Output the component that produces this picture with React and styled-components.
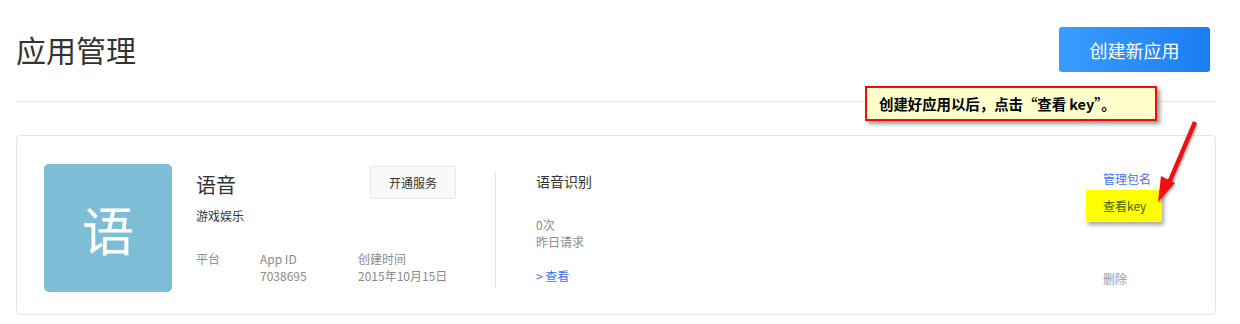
import React from "react";
import styled, { createGlobalStyle } from "styled-components";

const GlobalStyle = createGlobalStyle`
  body {
    margin: 0;
    background: #fff;
    font-family: "Noto Sans CJK SC", "Noto Sans", sans-serif;
    color: #333;
  }
`;

const Page = styled.div`
  position: relative;
  width: 1200px;
  margin-left: 16px;
  padding-top: 27px;
`;

const Header = styled.div`
  display: flex;
  justify-content: space-between;
  align-items: center;
  padding-bottom: 29px;
  border-bottom: 1px solid #e5e5e5;
`;

const Title = styled.h1`
  margin: 0;
  font-size: 30px;
  font-weight: 400;
  line-height: 45px;
  color: #333;
`;

const CreateButton = styled.button`
  width: 151px;
  height: 45px;
  margin-right: 6px;
  border: 0;
  border-radius: 3px;
  background: linear-gradient(to right, #3a9cfd, #1a7ef2);
  color: #fff;
  font-family: inherit;
  font-size: 18px;
`;

const Card = styled.div`
  display: flex;
  align-items: flex-start;
  margin-top: 33px;
  padding: 28px 28px 22px 27px;
  border: 1px solid #e5e5e5;
  border-radius: 4px;
  height: 128px;
`;

const AppIcon = styled.div`
  display: flex;
  align-items: center;
  justify-content: center;
  width: 128px;
  height: 128px;
  border-radius: 5px;
  background: #7dbed6;
  color: #fff;
  font-size: 52px;
`;

const Info = styled.div`
  display: flex;
  flex-direction: column;
  width: 260px;
  margin-left: 24px;
`;

const NameRow = styled.div`
  display: flex;
  justify-content: space-between;
  align-items: flex-start;
`;

const Name = styled.div`
  margin-top: 9px;
  font-size: 20px;
  line-height: 24px;
`;

const ServiceButton = styled.button`
  width: 86px;
  height: 33px;
  margin-top: 2px;
  border: 1px solid #e8e8e8;
  border-radius: 2px;
  background: #f9f9f9;
  color: #333;
  font-family: inherit;
  font-size: 12px;
`;

const Category = styled.div`
  margin-top: 8px;
  font-size: 12px;
  line-height: 18px;
`;

const Meta = styled.div`
  display: flex;
  margin-top: 25px;
`;

const MetaItem = styled.div`
  width: ${(p) => p.$w}px;
  font-size: 12px;
  line-height: 17px;
  color: #8a8a8a;
`;

const Divider = styled.div`
  align-self: stretch;
  width: 1px;
  margin: 8px 40px 4px 39px;
  background: #e5e5e5;
`;

const Stats = styled.div`
  display: flex;
  flex-direction: column;
  flex: 1;
  padding-top: 8px;
`;

const StatTitle = styled.div`
  font-size: 14px;
  line-height: 18px;
`;

const StatValue = styled.div`
  margin-top: 26px;
  font-size: 12px;
  line-height: 17px;
  color: #8a8a8a;
`;

const Link = styled.a`
  color: #3f74ef;
  font-size: 12px;
  line-height: 17px;
  text-decoration: none;
`;

const ViewLink = styled(Link)`
  margin-top: 17px;
`;

const Actions = styled.div`
  display: flex;
  flex-direction: column;
  align-items: flex-start;
  width: 84px;
  padding-top: 6px;
`;

const KeyButton = styled.a`
  margin: 3px 0 0 -17px;
  padding: 7px 16px 8px 17px;
  background: #ffff00;
  box-shadow: 2px 3px 4px rgba(0, 0, 0, 0.35);
  color: #45650c;
  font-size: 12px;
  line-height: 17px;
`;

const DeleteLink = styled.a`
  margin-top: 48px;
  color: #999;
  font-size: 12px;
  line-height: 17px;
`;

const Callout = styled.div`
  position: absolute;
  left: 849px;
  top: 86px;
  width: 276px;
  height: 31px;
  display: flex;
  align-items: center;
  padding-left: 12px;
  background: #ffffcc;
  border: 2px solid #f10d0d;
  box-shadow: 3px 3px 4px rgba(0, 0, 0, 0.4);
  color: #000;
  font-size: 14.4px;
  font-weight: 700;
`;

// svg origin sits at page x 1140, y 110
const Arrow = styled.svg`
  position: absolute;
  left: 1124px;
  top: 110px;
  overflow: visible;
`;

export default function App() {
  return (
    <>
      <GlobalStyle />
      <Page>
        <Header>
          <Title>应用管理</Title>
          <CreateButton>创建新应用</CreateButton>
        </Header>
        <Card>
          <AppIcon>语</AppIcon>
          <Info>
            <NameRow>
              <Name>语音</Name>
              <ServiceButton>开通服务</ServiceButton>
            </NameRow>
            <Category>游戏娱乐</Category>
            <Meta>
              <MetaItem $w={64}>平台</MetaItem>
              <MetaItem $w={98}>
                App ID
                <br />
                7038695
              </MetaItem>
              <MetaItem $w={98}>
                创建时间
                <br />
                2015年10月15日
              </MetaItem>
            </Meta>
          </Info>
          <Divider />
          <Stats>
            <StatTitle>语音识别</StatTitle>
            <StatValue>
              0次
              <br />
              昨日请求
            </StatValue>
            <ViewLink>&gt; 查看</ViewLink>
          </Stats>
          <Actions>
            <Link>管理包名</Link>
            <KeyButton>查看key</KeyButton>
            <DeleteLink>删除</DeleteLink>
          </Actions>
        </Card>
        <Callout>创建好应用以后，点击“查看 key”。</Callout>
        <Arrow width="70" height="100" viewBox="0 0 70 100">
          <g fill="#ee1111" stroke="none" style={{ filter: "drop-shadow(1px 2px 1px rgba(0,0,0,0.3))" }}>
            <polygon points="53,11 57,13 31,74 27,72" />
            <polygon points="21,66 35,73 18,92" />
          </g>
        </Arrow>
      </Page>
    </>
  );
}
